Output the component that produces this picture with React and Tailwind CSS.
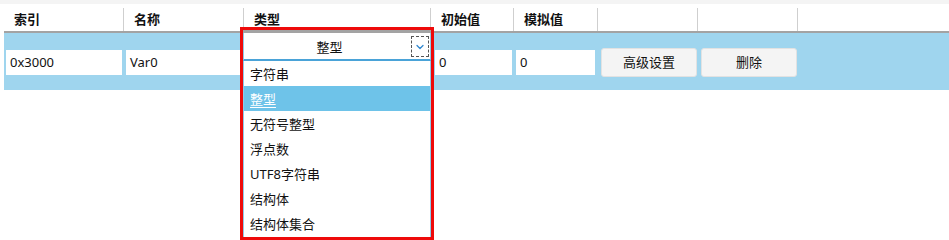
import { ChevronDown } from "lucide-react";

const cols = [
  { label: "索引", w: "w-[123px]", pl: "pl-[14px]" },
  { label: "名称", w: "w-[119px]", pl: "pl-[10px]" },
  { label: "类型", w: "w-[186px]", pl: "pl-[10px]" },
  { label: "初始值", w: "w-[82px]", pl: "pl-[10px]" },
  { label: "模拟值", w: "w-[83px]", pl: "pl-[10px]" },
  { label: "", w: "w-[99px]", pl: "" },
  { label: "", w: "w-[99px]", pl: "" },
];

const options = ["字符串", "整型", "无符号整型", "浮点数", "UTF8字符串", "结构体", "结构体集合"];

function Cell({ value, w }) {
  return (
    <div className={`${w} h-[25px] bg-white flex items-center pl-[4px] text-[13px] text-[#111]`}>{value}</div>
  );
}

function Btn({ label, className }) {
  return (
    <button className={`w-[96px] h-[29px] rounded-[3px] bg-[#f4f4f4] border border-[#e2e2e2] text-[13px] text-[#111] ${className}`}>
      {label}
    </button>
  );
}

export default function App() {
  const selected = "整型";
  return (
    <div className="relative w-[949px] h-[240px] bg-white overflow-hidden font-['Noto_Sans','Noto_Sans_CJK_SC',sans-serif]">
      <div className="h-[4px] bg-[#f4f4f4]" />
      {/* header */}
      <div className="flex h-[27px]">
        {cols.map((c, i) => (
          <div key={i} className="flex">
            <div className={`${c.w} ${c.pl} pt-[6px] text-[13px] font-bold text-[#111] leading-[18px]`}>{c.label}</div>
            <div className="mt-[4px] h-[23px] w-px bg-[#cfcfcf]" />
          </div>
        ))}
      </div>
      <div className="ml-[4px] h-[2px] bg-[#a3a3a3]" />
      {/* data row */}
      <div className="ml-[4px] h-[57px] bg-[#9fd5ee] flex items-start">
        <div className="flex items-center mt-[17px] ml-[2px]">
          <Cell value="0x3000" w="w-[116px]" />
          <div className="w-[4px]" />
          <Cell value="Var0" w="w-[116px]" />
          <div className="w-[193px]" />
          <Cell value="0" w="w-[77px]" />
          <div className="w-[4px]" />
          <Cell value="0" w="w-[79px]" />
        </div>
        <Btn label="高级设置" className="mt-[15px] ml-[6px]" />
        <Btn label="删除" className="mt-[15px] ml-[4px]" />
      </div>

      {/* open combo dropdown, outlined in red */}
      <div className="absolute left-[240px] top-[27px] w-[194px] h-[213px] border-[3px] border-[#ee0a0a] bg-white flex flex-col">
        <div className="h-[3px] bg-[#a3a3a3]" />
        <div className="h-[28px] flex items-center border-x border-[#8fcbe8] border-b-2 border-b-[#4aa3d8]">
          <div className="flex-1 text-center text-[13px] text-[#111] pl-[4px] pt-[3px]">{selected}</div>
          <div className="w-[18px] h-[21px] mr-[1px] mt-[1px] border border-dashed border-[#555] flex items-center justify-center">
            <ChevronDown size={12} strokeWidth={2.5} className="text-[#2f86cf]" />
          </div>
        </div>
        <div className="flex-1 flex flex-col border-x border-[#8fcbe8]">
          {options.map((o) => (
            <div
              key={o}
              className={`h-[25px] flex items-center pl-[6px] pt-[2px] text-[13px] ${
                o === selected ? "bg-[#6ec3e9] text-white underline underline-offset-[3px]" : "text-[#111]"
              }`}
            >
              {o}
            </div>
          ))}
        </div>
      </div>
    </div>
  );
}
